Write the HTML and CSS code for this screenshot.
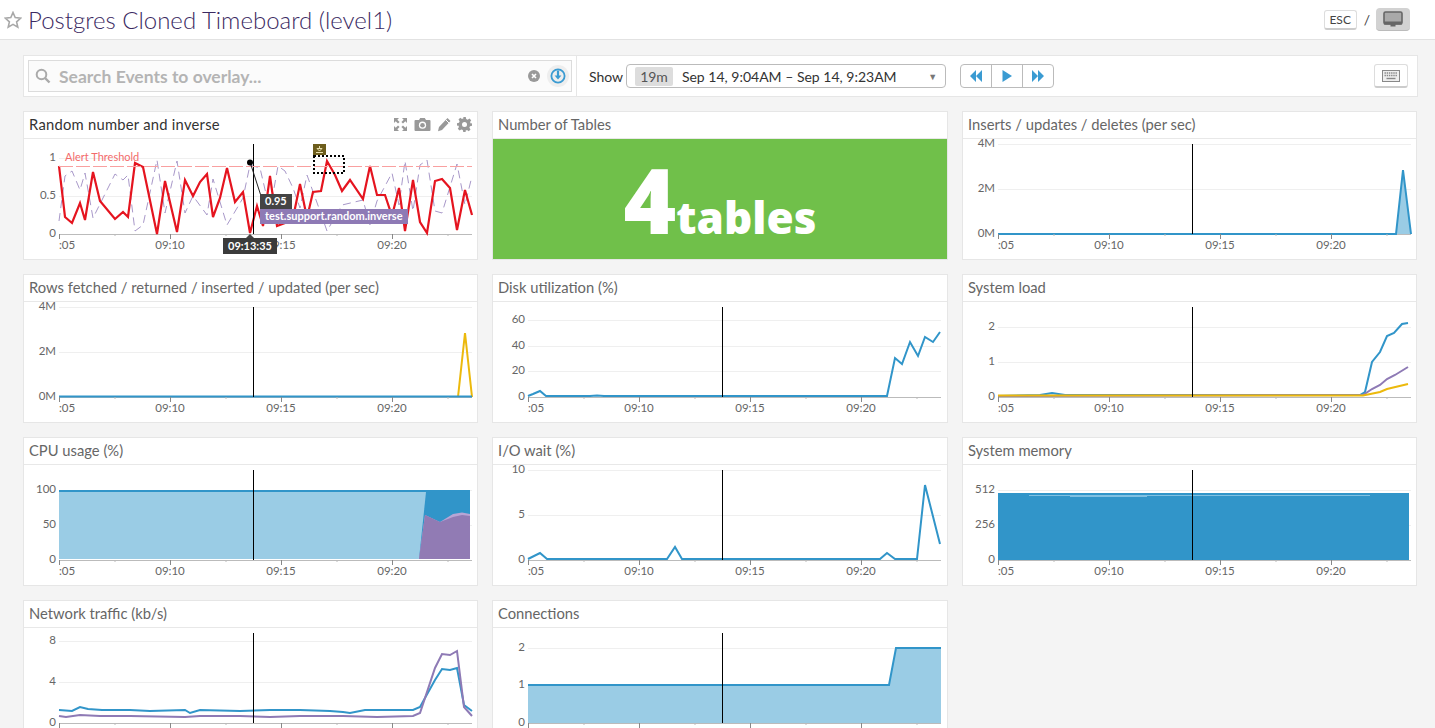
FILE: index.html
```html
<!DOCTYPE html>
<html lang="en">
<head>
  <meta charset="UTF-8" />
  <title>Postgres Cloned Timeboard (level1)</title>
  <link rel="stylesheet" href="styles.css">
</head>
<body>

  <!-- Page header -->
  <div class="page-header">
    <svg class="star" width="18" height="18" viewBox="0 0 18 18"><polygon points="9,1.500 11.200,6.600 16.800,7.100 12.600,10.800 13.800,16.200 9,13.400 4.200,16.200 5.400,10.800 1.200,7.100 6.800,6.600" fill="none" stroke="#a8a8a8" stroke-width="1.600"/></svg>
    <h1>Postgres Cloned Timeboard (level1)</h1>
    <div class="header-right">
      <span class="key">ESC</span>
      <span class="slash">/</span>
      <span class="tv-btn">
        <svg width="20" height="17" viewBox="0 0 20 17"><rect x="1" y="1" width="18" height="12" rx="1.500" fill="#a9a9a9" stroke="#666" stroke-width="1.600"/><rect x="1" y="10.500" width="18" height="3" fill="#666"/><rect x="7.500" y="13" width="5" height="2.500" fill="#666"/></svg>
      </span>
    </div>
  </div>

  <!-- Search and time controls -->
  <div class="toolbar">
    <div class="search-cell">
      <div class="search-box">
        <svg width="16" height="16" viewBox="0 0 16 16"><circle cx="6.500" cy="6.500" r="4.800" fill="none" stroke="#aaa" stroke-width="2"/><line x1="10" y1="10" x2="14.500" y2="14.500" stroke="#aaa" stroke-width="2.400"/></svg>
        <span class="placeholder">Search Events to overlay...</span>
        <svg class="clear" width="12" height="12" viewBox="0 0 12 12"><circle cx="6" cy="6" r="6" fill="#999"/><path d="M4 4l4 4M8 4l-4 4" stroke="#fff" stroke-width="1.600"/></svg>
        <span class="overlay-btn">
          <svg width="16" height="16" viewBox="0 0 16 16"><circle cx="8" cy="8" r="6.600" fill="none" stroke="#3a9bd2" stroke-width="1.800"/><path d="M8 2.500v7" stroke="#3a9bd2" stroke-width="2.200"/><path d="M4.600 7.400h6.800L8 11.400z" fill="#3a9bd2"/></svg>
        </span>
      </div>
    </div>
    <div class="time-cell">
      <span class="show-label">Show</span>
      <div class="range-select">
        <span class="range-badge">19m</span>
        <span class="range-text">Sep 14, 9:04AM – Sep 14, 9:23AM</span>
        <span class="range-arrow">▼</span>
      </div>
      <div class="step-btns">
        <span class="step-btn"><svg width="14" height="12" viewBox="0 0 14 12"><path d="M7 0v12L1 6zM13 0v12L7 6z" fill="#3a9bd2"/></svg></span>
        <span class="step-btn"><svg width="12" height="12" viewBox="0 0 12 12"><path d="M1.500 0v12L11 6z" fill="#3a9bd2"/></svg></span>
        <span class="step-btn"><svg width="14" height="12" viewBox="0 0 14 12"><path d="M1 0v12L7 6zM7 0v12L13 6z" fill="#3a9bd2"/></svg></span>
      </div>
      <span class="kbd-btn">
        <svg width="18" height="12" viewBox="0 0 18 12"><rect x="0.500" y="0.500" width="17" height="11" fill="#eee" stroke="#888"/><path d="M2.500 3h13M2.500 5.500h13" stroke="#888" stroke-width="1.400" stroke-dasharray="1.400 .8"/><path d="M4.500 8.500h9" stroke="#888" stroke-width="1.400"/></svg>
      </span>
    </div>
  </div>

  <!-- Graphs -->
  <div class="board">
    <div class="widget">
      <div class="widget-title hovered">
        Random number and inverse
        <span class="widget-tools">
          <svg width="15" height="15" viewBox="0 0 15 15"><path d="M1 1h5L4.300 2.700 6.600 5 5 6.600 2.700 4.300 1 6zM14 1v5l-1.700-1.700L10 6.600 8.400 5l2.300-2.300L9 1zM1 14V9l1.700 1.700L5 8.400 6.600 10l-2.300 2.300L6 14zM14 14H9l1.700-1.700L8.400 10 10 8.400l2.300 2.300L14 9z" fill="#999"/></svg>
          <svg width="17" height="15" viewBox="0 0 17 15"><path d="M1.500 3H5l1.200-2h4.600L12 3h3.500q1 0 1 1v9q0 1-1 1h-14q-1 0-1-1V4q0-1 1-1z" fill="#999"/><circle cx="8.500" cy="8.200" r="3.600" fill="#fff"/><circle cx="8.500" cy="8.200" r="2.300" fill="#999"/></svg>
          <svg width="14" height="15" viewBox="0 0 14 15"><path d="M10.500 1l3 3L5 13l-4 1.200L2 10z" fill="#999"/><path d="M9 3l3 3" stroke="#fff"/></svg>
          <svg width="15" height="15" viewBox="0 0 24 24"><path d="M10 0h4l.7 3.200 2.400 1 2.800-1.800 2.800 2.800-1.800 2.800 1 2.400L24 10v4l-3.200.7-1 2.400 1.800 2.800-2.800 2.800-2.800-1.800-2.400 1L14 24h-4l-.7-3.200-2.400-1-2.800 1.800-2.800-2.800 1.800-2.800-1-2.400L0 14v-4l3.200-.7 1-2.400L2.400 4.100l2.800-2.800L8 3.100l2.400-1z" fill="#999"/><circle cx="12" cy="12" r="4" fill="#fff"/></svg>
        </span>
      </div>
      <div class="chart" data-chart="random"></div>
    </div>
    <div class="widget">
      <div class="widget-title">Number of Tables</div>
      <div class="query-value"><span class="qv-num">4</span><span class="qv-unit">tables</span></div>
    </div>
    <div class="widget">
      <div class="widget-title">Inserts / updates / deletes (per sec)</div>
      <div class="chart" data-chart="inserts"></div>
    </div>
    <div class="widget">
      <div class="widget-title">Rows fetched / returned / inserted / updated (per sec)</div>
      <div class="chart" data-chart="rows"></div>
    </div>
    <div class="widget">
      <div class="widget-title">Disk utilization (%)</div>
      <div class="chart" data-chart="disk"></div>
    </div>
    <div class="widget">
      <div class="widget-title">System load</div>
      <div class="chart" data-chart="load"></div>
    </div>
    <div class="widget">
      <div class="widget-title">CPU usage (%)</div>
      <div class="chart" data-chart="cpu"></div>
    </div>
    <div class="widget">
      <div class="widget-title">I/O wait (%)</div>
      <div class="chart" data-chart="iowait"></div>
    </div>
    <div class="widget">
      <div class="widget-title">System memory</div>
      <div class="chart" data-chart="memory"></div>
    </div>
    <div class="widget">
      <div class="widget-title">Network traffic (kb/s)</div>
      <div class="chart" data-chart="network"></div>
    </div>
    <div class="widget">
      <div class="widget-title">Connections</div>
      <div class="chart" data-chart="connections"></div>
    </div>
  </div>

  <script src="charts.js"></script>
</body>
</html>
```

FILE: styles.css
```css
html, body {
  height: 728px;
  overflow: hidden;
}

body {
  margin: 0;
  font-family: Lato, 'Open Sans', sans-serif;
  background-color: #f4f4f4;
  color: #444;
}

.page-header {
  display: flex;
  align-items: center;
  height: 39px;
  padding: 0 25px 0 4px;
  background: #fff;
  border-bottom: 1px solid #e2e2e2;
}

.star {
  margin-right: 6px;
}

.page-header h1 {
  margin: 0;
  font-size: 24px;
  font-weight: 300;
  color: #3b2a62;
}

.header-right {
  display: flex;
  align-items: center;
  margin-left: auto;
}

.key {
  width: 31px;
  height: 17px;
  line-height: 17px;
  text-align: center;
  font-size: 12px;
  color: #444;
  background: #fff;
  border: 1px solid #ddd;
  border-bottom: 2px solid #ccc;
  border-radius: 3px;
  margin-right: 7px;
}

.slash {
  font-size: 14px;
  margin-right: 6px;
}

.tv-btn {
  display: flex;
  align-items: center;
  justify-content: center;
  width: 34px;
  height: 22px;
  background: #d2d2d2;
  border-radius: 4px;
  border-bottom: 1px solid #bbb;
}

.toolbar {
  display: flex;
  box-sizing: border-box;
  width: 1395px;
  height: 42px;
  margin: 15px 0 14px 23px;
  background: #fff;
  border: 1px solid #e6e6e6;
}

.search-cell {
  box-sizing: border-box;
  width: 553px;
  padding: 4px;
  border-right: 1px solid #e6e6e6;
}

.search-box {
  display: flex;
  align-items: center;
  box-sizing: border-box;
  height: 32px;
  padding: 0 2px 0 6px;
  background: #fbfbfb;
  border: 1px solid #dcdcdc;
}

.placeholder {
  margin-left: 8px;
  font-size: 17.5px;
  font-weight: 700;
  color: #b4b4b4;
}

.clear {
  margin-left: auto;
  margin-right: 7px;
}

.overlay-btn {
  display: flex;
  align-items: center;
  justify-content: center;
  width: 22px;
  height: 22px;
  background: #eee;
  border-radius: 50%;
}

.time-cell {
  display: flex;
  flex: 1;
  align-items: center;
  padding-left: 12px;
}

.show-label {
  font-size: 14px;
  color: #333;
  margin-right: 3px;
}

.range-select {
  display: flex;
  align-items: center;
  box-sizing: border-box;
  width: 320px;
  height: 24px;
  padding: 0 8px;
  border: 1px solid #bbb;
  border-radius: 4px;
  font-size: 14px;
  color: #333;
}

.range-badge {
  padding: 1px 5px;
  margin-right: 9px;
  background: #ddd;
  border-radius: 2px;
  color: #555;
}

.range-arrow {
  margin-left: auto;
  font-size: 9px;
  color: #777;
}

.step-btns {
  display: flex;
  margin-left: 14px;
  border: 1px solid #bbb;
  border-radius: 4px;
}

.step-btn {
  display: flex;
  align-items: center;
  justify-content: center;
  width: 30px;
  height: 22px;
  border-left: 1px solid #bbb;
}

.step-btn:first-child {
  border-left: none;
}

.kbd-btn {
  display: flex;
  align-items: center;
  justify-content: center;
  width: 32px;
  height: 21px;
  margin-left: auto;
  margin-right: 9px;
  background: #fff;
  border: 1px solid #ddd;
  border-bottom: 2px solid #ccc;
  border-radius: 3px;
}

.board {
  display: grid;
  grid-template-columns: 455px 456px 455px;
  grid-auto-rows: 149px;
  gap: 14px;
  margin-left: 23px;
}

.widget {
  background: #fff;
  border: 1px solid #e6e6e6;
}

.widget-title {
  display: flex;
  align-items: center;
  justify-content: space-between;
  height: 24px;
  padding: 0 5px 2px;
  font-size: 14.75px;
  color: #666;
  border-bottom: 1px solid #e8e8e8;
}

.widget-title.hovered {
  color: #333;
  letter-spacing: 0.25px;
}

.widget-tools {
  display: flex;
  align-items: center;
  gap: 6px;
}

.chart svg {
  display: block;
  overflow: visible;
  margin-left: -1px;
}

.chart text {
  font-family: Lato, 'Open Sans', sans-serif;
  font-size: 11.5px;
  fill: #666;
}

.chart .alert-label {
  fill: #f36b6b;
  font-size: 11px;
}

.chart .tip-text {
  fill: #fff;
  font-weight: 700;
  font-size: 11px;
}

.query-value {
  display: flex;
  align-items: baseline;
  justify-content: center;
  height: 120px;
  line-height: 120px;
  font-family: 'Open Sans', sans-serif;
  color: #fff;
  font-weight: 800;
  background: #70c04a;
}

.qv-num {
  font-size: 90px;
}

.qv-unit {
  font-size: 44px;
}
```

FILE: charts.js
```js
// Hand-traced series. All points are page coordinates, the viewBox of each
// graph is set so that they land where they belong.
const BLUE = '#3195c9';
const LIGHT_BLUE = '#9acce5';
const PURPLE = '#8e7ab5';
const YELLOW = '#ecb90c';
const RED = '#e5141f';

const COLS = [23, 492, 962];
const ROWS = [110, 273, 436, 599];

const charts = {
  random: {
    col: 0, row: 0,
    yTicks: [['1', 158], ['0.5', 196], ['0', 234]],
    lines: [
      { color: '#a898c9', width: 1, dash: '8 5', points: '59,221 65,176 72,171 80,190 85,173 93,218 115,174 123,180 128,175 135,231 143,225 157,160 165,213 177,161 185,213 193,196 207,215 213,179 227,225 243,198 250,165 260,168 270,211 278,166 285,171 293,188 300,208 307,175 320,211 327,231 342,205 363,200 370,225 377,201 392,173 399,205 405,161 413,211 420,165 427,160 435,211 442,213 457,164 465,205 472,176' },
      { color: RED, width: 2.200, points: '59,166 65,217 72,223 80,203 85,220 93,172 100,201 115,219 123,212 128,217 135,163 143,167 157,234 165,181 177,232 185,180 193,196 200,182 207,174 213,217 220,198 227,168 235,202 243,192 250,233 257,206 263,226 270,176 277,226 285,223 293,218 300,184 307,218 313,192 321,191 327,161 335,175 342,191 350,180 363,199 370,166 377,195 385,195 392,216 399,188 405,231 413,180 420,222 427,233 435,181 442,179 450,188 457,230 465,190 472,215' }
    ],
    extra: `
      <line x1="59" y1="166.500" x2="472" y2="166.500" stroke="#f9a0a0" stroke-width="1.200" stroke-dasharray="14 3"/>
      <text class="alert-label" x="65" y="161">Alert Threshold</text>
      <rect x="313" y="144" width="13" height="11" fill="#6d5d1c"/>
      <path d="M319.500 146v3M317 148.500h5l-2.500 2.500zM316 152.500h7" stroke="#e8dfae" fill="none"/>
      <rect x="314" y="156" width="30" height="17" fill="none" stroke="#000" stroke-width="2" stroke-dasharray="2 2"/>
      <line x1="250" y1="162" x2="261" y2="196" stroke="#222"/>
      <circle cx="250" cy="162.500" r="3" fill="#000"/>
      <rect x="260" y="194" width="32" height="15" fill="#444"/>
      <text class="tip-text" x="265" y="205">0.95</text>
      <rect x="260" y="209" width="148" height="15" fill="#8e7ab5"/>
      <text class="tip-text" x="265" y="220">test.support.random.inverse</text>
      <path d="M250 234l4.500 4.500h-9z" fill="#444"/>
      <rect x="223" y="238" width="54" height="16" fill="#3b3b3b"/>
      <text class="tip-text" x="228" y="250">09:13:35</text>`
  },
  inserts: {
    col: 2, row: 0,
    yTicks: [['4M', 144], ['2M', 189], ['0M', 234]],
    areas: [{ color: LIGHT_BLUE, points: '1396,234 1403,170 1411,234' }],
    lines: [{ color: BLUE, width: 2, points: '998,234 1396,234 1403,170 1411,234' }]
  },
  rows: {
    col: 0, row: 1,
    yTicks: [['4M', 307], ['2M', 352], ['0M', 397]],
    lines: [
      { color: YELLOW, width: 2, points: '458,397 465,333 472,397' },
      { color: BLUE, width: 2, points: '59,396.500 472,396.500' }
    ]
  },
  disk: {
    col: 1, row: 1,
    yTicks: [['60', 320], ['40', 346], ['20', 371], ['0', 397]],
    lines: [{ color: BLUE, width: 2, points: '528,396 533,394 540,391 546,396 590,396 597,395.500 604,396 880,396 887,396 895,358 902,364 910,342 918,356 925,337 933,342 940,332' }]
  },
  load: {
    col: 2, row: 1,
    yTicks: [['2', 327], ['1', 362], ['0', 397]],
    lines: [
      { color: BLUE, width: 2, points: '998,396 1040,395 1052,393 1065,395 1360,395 1365,392 1372,362 1380,352 1387,336 1394,333 1402,324 1408,323' },
      { color: PURPLE, width: 2, points: '998,396 1363,395 1372,389 1380,385 1387,379 1395,375 1408,367' },
      { color: YELLOW, width: 2, points: '998,395.500 1363,395.500 1380,392 1387,389 1408,384' }
    ]
  },
  cpu: {
    col: 0, row: 2,
    yTicks: [['100', 490], ['50', 525], ['0', 560]],
    areas: [
      { color: BLUE, points: '59,490 470,490 470,559 419,559 59,559' },
      { color: LIGHT_BLUE, points: '59,492 426,492 419,559 59,559' },
      { color: '#b8a5d5', points: '419,559 425,515 440,522 453,514 462,512.500 470,514 470,559' },
      { color: '#917bb4', points: '419,559 425,515 440,522 453,517 462,515 470,516 470,559' }
    ]
  },
  iowait: {
    col: 1, row: 2,
    yTicks: [['10', 470], ['5', 515], ['0', 560]],
    lines: [{ color: BLUE, width: 2, points: '528,559 540,553 547,559 667,559 675,547 682,559 880,559 887,553 895,559 917,559 925,485 940,544' }]
  },
  memory: {
    col: 2, row: 2,
    yTicks: [['512', 490], ['256', 525], ['0', 560]],
    areas: [{ color: BLUE, points: '998,493 1409,493 1409,560 998,560' }],
    lines: [
      { color: '#7fc0e2', width: 1, points: '1029,495.500 1370,495.500' },
      { color: '#7fc0e2', width: 1, points: '1070,496.500 1147,496.500' }
    ]
  },
  network: {
    col: 0, row: 3,
    yTicks: [['8', 641], ['4', 682], ['0', 723]],
    lines: [
      { color: BLUE, width: 2, points: '59,710 72,711 80,707 88,709 102,710 130,710 150,711 185,710 190,713 200,710 240,711 270,710 300,710 330,711 343,712 350,713 365,710 400,710 413,710 420,707 435,680 442,669 450,670 457,668 464,705 472,711' },
      { color: PURPLE, width: 2, points: '59,716 66,717 80,715 100,716 130,716 185,717 200,716 240,716 270,717 300,716 343,716 377,717 413,716 420,713 435,668 442,654 450,655 457,651 464,707 472,716' }
    ]
  },
  connections: {
    col: 1, row: 3,
    yTicks: [['2', 648], ['1', 685], ['0', 723]],
    areas: [{ color: LIGHT_BLUE, points: '528,685 889,685 896,648 941,648 941,723 528,723' }],
    lines: [{ color: BLUE, width: 2, points: '528,685 889,685 896,648 941,648' }]
  }
};

function renderChart(chart) {
  const left = COLS[chart.col];
  const top = ROWS[chart.row] + 29;
  const start = left + 36;
  const axisY = top + 95;
  let svg = '';

  // x axis goes under the series, a flat series hides it
  svg += `<line x1="${start}" y1="${axisY + 0.5}" x2="${start + 413}" y2="${axisY + 0.5}" stroke="#bbb"/>`;

  chart.yTicks.forEach(([label, y], i) => {
    if (i < chart.yTicks.length - 1) {
      svg += `<line x1="${start}" y1="${y + 0.5}" x2="${start + 413}" y2="${y + 0.5}" stroke="#efefef"/>`;
    }
    svg += `<text x="${start - 3}" y="${y + 3}" text-anchor="end">${label}</text>`;
  });

  (chart.areas || []).forEach(a => {
    svg += `<polygon points="${a.points}" fill="${a.color}"/>`;
  });
  (chart.lines || []).forEach(l => {
    const dash = l.dash ? `stroke-dasharray="${l.dash}"` : '';
    svg += `<polyline points="${l.points}" fill="none" stroke="${l.color}" stroke-width="${l.width}" ${dash}/>`;
  });

  const cursorX = start + 194.5;
  svg += `<line x1="${cursorX}" y1="${top + 5}" x2="${cursorX}" y2="${axisY}" stroke="#000"/>`;

  [':05', '09:10', '09:15', '09:20'].forEach((label, i) => {
    const x = start + i * 111;
    svg += `<line x1="${x + 0.5}" y1="${axisY}" x2="${x + 0.5}" y2="${axisY + 5}" stroke="#888"/>`;
    svg += `<line x1="${x + 56}" y1="${axisY}" x2="${x + 56}" y2="${axisY + 2}" stroke="#bbb"/>`;
    svg += `<text x="${x}" y="${axisY + 15}" text-anchor="${i ? 'middle' : 'start'}">${label}</text>`;
  });

  svg += chart.extra || '';
  return `<svg width="455" height="120" viewBox="${left} ${top} 455 120">${svg}</svg>`;
}

document.querySelectorAll('.chart').forEach(el => {
  el.innerHTML = renderChart(charts[el.dataset.chart]);
});
```
